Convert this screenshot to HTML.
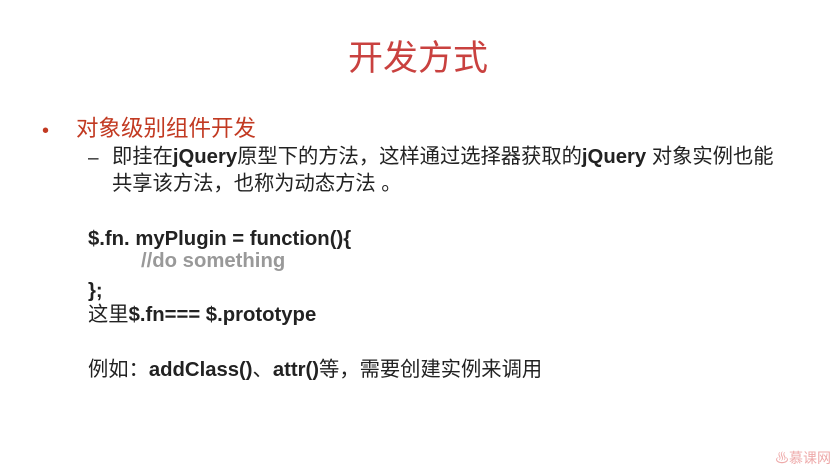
<!DOCTYPE html>
<html><head><meta charset="utf-8"><style>
body{margin:0;width:836px;height:472px;background:#fff;position:relative;overflow:hidden;font-family:"Liberation Sans","Noto Sans CJK SC",sans-serif;}
.a{position:absolute;white-space:nowrap;}
</style></head><body>
<div class="a" style="left:348px;top:37px;font-size:35px;color:#c9413f;line-height:44px;">开发方式</div>
<div class="a" style="left:42px;top:118px;font-size:20px;color:#c23a22;line-height:26px;">•</div>
<div class="a" style="left:76px;top:114px;font-size:22.5px;color:#c23a22;line-height:30px;">对象级别组件开发</div>
<div class="a" style="left:88px;top:146px;font-size:19px;color:#222;line-height:26px;">–</div>
<div class="a" style="left:112px;top:144px;font-size:20.3px;color:#222;line-height:27px;">即挂在<b>jQuery</b>原型下的方法，这样通过选择器获取的<b>jQuery</b> 对象实例也能<br>共享该方法，也称为动态方法 。</div>
<div class="a" style="left:88px;top:226px;font-size:20.3px;color:#222;font-weight:bold;line-height:26px;">$.fn. myPlugin = function(){</div>
<div class="a" style="left:141px;top:248px;font-size:20.3px;color:#999;font-weight:bold;line-height:26px;">//do something</div>
<div class="a" style="left:88px;top:278px;font-size:20.3px;color:#222;font-weight:bold;line-height:26px;">};</div>
<div class="a" style="left:88px;top:302px;font-size:20.3px;color:#222;line-height:26px;">这里<b>$.fn=== $.prototype</b></div>
<div class="a" style="left:88px;top:357px;font-size:20.3px;color:#222;line-height:26px;">例如：<b>addClass()</b>、<b>attr()</b>等，需要创建实例来调用</div>
<div class="a" style="left:775px;top:449px;font-size:14px;color:#eeaaaa;line-height:18px;">♨慕课网</div>
</body></html>
